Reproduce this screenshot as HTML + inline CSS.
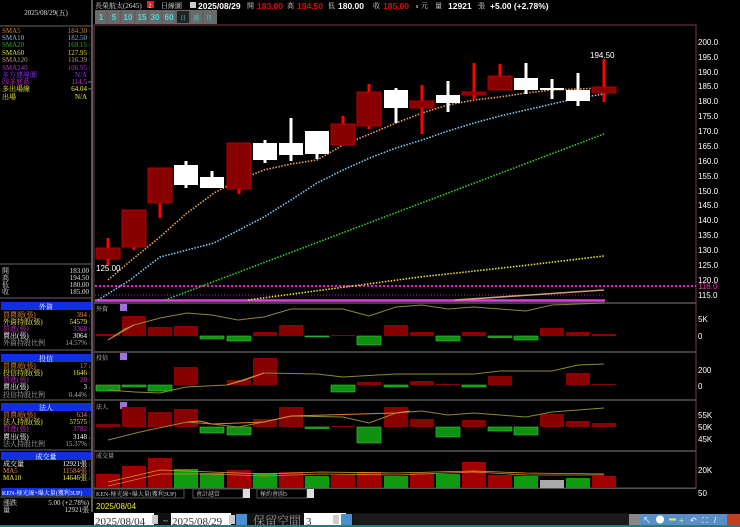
<!DOCTYPE html>
<html><head><meta charset="utf-8"><style>
html,body{margin:0;padding:0;background:#000;width:740px;height:527px;overflow:hidden}
svg{display:block}
text{font-family:"Liberation Serif","Noto Serif CJK SC",serif}
.s{font-size:7px}
.ax text,.sn text,text.sn{font-family:"Liberation Sans","Noto Sans CJK TC",sans-serif}
.ax text{font-size:8px;fill:#fff}
</style></head><body>
<svg width="740" height="527" viewBox="0 0 740 527">
<rect width="740" height="527" fill="#000"/>
<line x1="92" y1="0" x2="92" y2="512" stroke="#777" stroke-width="1.5"/>
<text x="46" y="15" class="s" fill="#ddd" text-anchor="middle">2025/08/29(五)</text>
<line x1="0" y1="26" x2="92" y2="26" stroke="#666"/>
<g class="s">
<text x="2" y="33" fill="#d08040">SMA5</text><text x="87" y="33" fill="#d08040" text-anchor="end">184.30</text>
<text x="2" y="40" fill="#7ab8e0">SMA10</text><text x="87" y="40" fill="#7ab8e0" text-anchor="end">182.50</text>
<text x="2" y="47" fill="#3a3">SMA20</text><text x="87" y="47" fill="#3a3" text-anchor="end">169.15</text>
<text x="2" y="55" fill="#dd3">SMA60</text><text x="87" y="55" fill="#dd3" text-anchor="end">127.95</text>
<text x="2" y="62" fill="#b98">SMA120</text><text x="87" y="62" fill="#b98" text-anchor="end">116.39</text>
<text x="2" y="70" fill="#a3c">SMA240</text><text x="87" y="70" fill="#a3c" text-anchor="end">106.95</text>
<text x="2" y="77" fill="#83f">多方連線圖</text><text x="87" y="77" fill="#83f" text-anchor="end">N/A</text>
<text x="2" y="84" fill="#c3c">四多底系</text><text x="87" y="84" fill="#c3c" text-anchor="end">114.5</text>
<text x="2" y="91" fill="#ee3">多出場線</text><text x="87" y="91" fill="#ee3" text-anchor="end">64.04</text>
<text x="2" y="99" fill="#ee3">出場</text><text x="87" y="99" fill="#ee3" text-anchor="end">N/A</text>
</g>
<g fill="#f22" font-size="6">
<text x="88" y="33">↑</text><text x="88" y="40">↑</text><text x="88" y="47">↑</text><text x="88" y="55">↑</text><text x="88" y="62">↑</text><text x="88" y="70">↑</text>
</g>
<g fill="#ccc" font-size="6"><text x="88" y="84">=</text><text x="88" y="91">=</text></g>
<line x1="0" y1="264" x2="92" y2="264" stroke="#666"/>
<g class="s" fill="#ddd">
<text x="2" y="273">開</text><text x="89" y="273" text-anchor="end">183.00</text>
<text x="2" y="280">高</text><text x="89" y="280" text-anchor="end">194.50</text>
<text x="2" y="287">低</text><text x="89" y="287" text-anchor="end">180.00</text>
<text x="2" y="294">收</text><text x="89" y="294" text-anchor="end">185.00</text>
</g>
<line x1="0" y1="298" x2="92" y2="298" stroke="#666"/>
<rect x="1" y="302" width="90" height="8" fill="#1030e0"/>
<text x="46" y="309" class="s" fill="#fff" text-anchor="middle">外資</text>
<g class="s">
<text x="3" y="317" fill="#e84">買賣超(張)</text><text x="87" y="317" fill="#e84" text-anchor="end">394</text>
<text x="3" y="324" fill="#ee4">外資持股(張)</text><text x="87" y="324" fill="#ee4" text-anchor="end">54579</text>
<text x="3" y="331" fill="#c3c">買進(張)</text><text x="87" y="331" fill="#c3c" text-anchor="end">3368</text>
<text x="3" y="338" fill="#fff">賣出(張)</text><text x="87" y="338" fill="#fff" text-anchor="end">3064</text>
<text x="3" y="345" fill="#aaa">外資持股比例</text><text x="87" y="345" fill="#aaa" text-anchor="end">14.57%</text>
</g>
<line x1="0" y1="350" x2="92" y2="350" stroke="#666"/>
<rect x="1" y="354" width="90" height="8" fill="#1030e0"/>
<text x="46" y="361" class="s" fill="#fff" text-anchor="middle">投信</text>
<g class="s">
<text x="3" y="368" fill="#e84">買賣超(張)</text><text x="87" y="368" fill="#e84" text-anchor="end">17</text>
<text x="3" y="375" fill="#ee4">投信持股(張)</text><text x="87" y="375" fill="#ee4" text-anchor="end">1646</text>
<text x="3" y="382" fill="#c3c">買進(張)</text><text x="87" y="382" fill="#c3c" text-anchor="end">20</text>
<text x="3" y="389" fill="#fff">賣出(張)</text><text x="87" y="389" fill="#fff" text-anchor="end">3</text>
<text x="3" y="397" fill="#aaa">投信持股比例</text><text x="87" y="397" fill="#aaa" text-anchor="end">0.44%</text>
</g>
<line x1="0" y1="400" x2="92" y2="400" stroke="#666"/>
<rect x="1" y="403" width="90" height="8" fill="#1030e0"/>
<text x="46" y="410" class="s" fill="#fff" text-anchor="middle">法人</text>
<g class="s">
<text x="3" y="417" fill="#e84">買賣超(張)</text><text x="87" y="417" fill="#e84" text-anchor="end">634</text>
<text x="3" y="424" fill="#ee4">法人持股(張)</text><text x="87" y="424" fill="#ee4" text-anchor="end">57575</text>
<text x="3" y="431" fill="#c3c">買進(張)</text><text x="87" y="431" fill="#c3c" text-anchor="end">3782</text>
<text x="3" y="439" fill="#fff">賣出(張)</text><text x="87" y="439" fill="#fff" text-anchor="end">3148</text>
<text x="3" y="446" fill="#aaa">法人持股比例</text><text x="87" y="446" fill="#aaa" text-anchor="end">15.37%</text>
</g>
<line x1="0" y1="450" x2="92" y2="450" stroke="#666"/>
<rect x="1" y="452" width="90" height="8" fill="#1030e0"/>
<text x="46" y="459" class="s" fill="#fff" text-anchor="middle">成交量</text>
<g class="s">
<text x="3" y="466" fill="#fff">成交量</text><text x="87" y="466" fill="#fff" text-anchor="end">12921張</text>
<text x="3" y="473" fill="#e84">MA5</text><text x="87" y="473" fill="#e84" text-anchor="end">11584張</text>
<text x="3" y="480" fill="#ee4">MA10</text><text x="87" y="480" fill="#ee4" text-anchor="end">14646張</text>
</g>
<g fill="#2c2" font-size="6">
<text x="88" y="317">↓</text><text x="88" y="368">↓</text><text x="88" y="389">↓</text><text x="88" y="417">↓</text><text x="88" y="439">↓</text><text x="88" y="466">↓</text><text x="88" y="480">↓</text>
</g>
<g fill="#f22" font-size="6">
<text x="88" y="324">↑</text><text x="88" y="331">↑</text><text x="88" y="338">↑</text><text x="88" y="345">↑</text><text x="88" y="375">↑</text><text x="88" y="382">↑</text><text x="88" y="397">↑</text><text x="88" y="424">↑</text><text x="88" y="431">↑</text><text x="88" y="446">↑</text><text x="88" y="473">↑</text>
</g>
<rect x="1" y="488" width="90" height="8" fill="#1030e0"/>
<text x="2" y="495" font-size="6" fill="#fff">KEN-極光線+爆大量(獲利3UP)</text>
<line x1="0" y1="497" x2="92" y2="497" stroke="#666"/>
<g class="s" fill="#ddd">
<text x="3" y="505">漲跌</text><text x="89" y="505" text-anchor="end">5.00 (+2.78%)</text>
<text x="3" y="512">量</text><text x="89" y="512" text-anchor="end">12921張</text>
</g>

<!-- top header -->
<g font-size="7">
<text x="95" y="8" fill="#ddd">長榮航太(2645)</text>
<rect x="147" y="1" width="7" height="7" fill="#d22"/><text x="148.5" y="7.5" font-size="6" fill="#fff">2</text>
<text x="161" y="8" fill="#ddd">日線圖</text>
<rect x="190" y="2" width="6" height="6" fill="#ccc"/>
<g class="sn" font-weight="bold" font-size="8.5">
<text x="198" y="9" fill="#fff">2025/08/29</text>
<text x="257" y="9" fill="#e00">183.00</text>
<text x="297" y="9" fill="#e00">194.50</text>
<text x="338" y="9" fill="#fff">180.00</text>
<text x="383" y="9" fill="#e00">185.00</text>
<text x="448" y="9" fill="#fff">12921</text>
<text x="490" y="9" fill="#fff">+5.00 (+2.78%)</text>
</g>
<text x="247" y="8" fill="#ddd">開</text>
<text x="287" y="8" fill="#ddd">高</text>
<text x="328" y="8" fill="#ddd">低</text>
<text x="373" y="8" fill="#ddd">收</text>
<text x="416" y="8" fill="#fff" font-size="6">s</text><text x="421" y="8" fill="#ddd">元</text>
<text x="435" y="8" fill="#ddd">量</text>
<text x="478" y="8" fill="#ddd">張</text>
</g>
<rect x="95" y="10" width="122" height="14" fill="#6a6a6a"/>
<g class="sn" fill="#4dd" font-size="8" font-weight="bold" text-anchor="middle">
<text x="101" y="20">1</text><text x="114" y="20">5</text><text x="128" y="20">10</text><text x="142" y="20">15</text><text x="155" y="20">30</text><text x="169" y="20">60</text>
</g>
<rect x="177" y="11" width="12" height="12" fill="#222"/>
<text x="183" y="20" font-size="6" fill="#4dd" text-anchor="middle">日</text>
<text x="196" y="20" font-size="6" fill="#4dd" text-anchor="middle">週</text>
<text x="209" y="20" font-size="6" fill="#4dd" text-anchor="middle">月</text>
<g stroke="#555"><line x1="107" y1="11" x2="107" y2="23"/><line x1="121" y1="11" x2="121" y2="23"/><line x1="135" y1="11" x2="135" y2="23"/><line x1="148" y1="11" x2="148" y2="23"/><line x1="162" y1="11" x2="162" y2="23"/><line x1="176" y1="11" x2="176" y2="23"/><line x1="190" y1="11" x2="190" y2="23"/><line x1="203" y1="11" x2="203" y2="23"/></g>

<rect x="94" y="25" width="602" height="463" fill="none" stroke="#7a3a4a"/>
<g stroke="#555" stroke-width="1.5">
<line x1="94" y1="303" x2="696" y2="303"/><line x1="94" y1="352" x2="696" y2="352"/><line x1="94" y1="400" x2="696" y2="400"/><line x1="94" y1="451" x2="696" y2="451"/><line x1="94" y1="488.5" x2="696" y2="488.5"/>
</g>
<g class="ax">
<text x="698" y="45">200.0</text><text x="698" y="60">195.0</text><text x="698" y="75">190.0</text><text x="698" y="89">185.0</text><text x="698" y="104">180.0</text><text x="698" y="119">175.0</text><text x="698" y="134">170.0</text><text x="698" y="149">165.0</text><text x="698" y="164">160.0</text><text x="698" y="179">155.0</text><text x="698" y="194">150.0</text><text x="698" y="208">145.0</text><text x="698" y="223">140.0</text><text x="698" y="238">135.0</text><text x="698" y="253">130.0</text><text x="698" y="268">125.0</text><text x="698" y="283">120.0</text><text x="698" y="298">115.0</text>
<text x="698" y="322">5K</text><text x="698" y="339">0</text>
<text x="698" y="373">200</text><text x="698" y="389">0</text>
<text x="698" y="418">55K</text><text x="698" y="430">50K</text><text x="698" y="442">45K</text>
<text x="698" y="473">20K</text><text x="698" y="496">50</text>
<text x="698" y="289" style="fill:#e3a">118.0</text>
</g>

<line x1="95" y1="286" x2="696" y2="286" stroke="#e020c0" stroke-width="2" stroke-dasharray="2 2"/>
<line x1="95" y1="295" x2="604" y2="295" stroke="#b020b0" stroke-width="1" stroke-dasharray="1 2"/>
<line x1="95" y1="300.5" x2="605" y2="300.5" stroke="#e040e0" stroke-width="2.5"/>
<g fill="none" stroke-width="1.6" stroke-dasharray="1.5 1.5">
<polyline stroke="#f0a050" points="108,280 134,258 160,237 187,213 214,193 239,180 264,170 291,164 317,160 343,145 370,134 396,123 422,113 448,105 474,100 500,97 526,93 552,90 578,89 604,88"/>
<polyline stroke="#80c8f0" points="98,300 130,280 160,257 187,250 214,243 239,230 264,217 291,200 317,183 343,170 372,157 396,148 422,140 448,131 474,123 500,116 526,110 552,104 578,98 604,94"/>
<polyline stroke="#30d030" points="165,300 604,134"/>
<polyline stroke="#e8e030" points="248,300 330,289 420,277 520,266 604,256"/>
<polyline stroke="#d0a070" stroke-dasharray="none" points="455,300 530,295 604,290"/>
</g>
<g stroke-width="3">
<line x1="108" y1="238" x2="108" y2="265" stroke="#f00"/>
<line x1="134" y1="210" x2="134" y2="250" stroke="#f00"/>
<line x1="160" y1="168" x2="160" y2="218" stroke="#f00"/>
<line x1="186" y1="161" x2="186" y2="188" stroke="#fff"/>
<line x1="212" y1="171" x2="212" y2="188" stroke="#fff"/>
<line x1="239" y1="143" x2="239" y2="194" stroke="#f00"/>
<line x1="265" y1="140" x2="265" y2="163" stroke="#fff"/>
<line x1="291" y1="118" x2="291" y2="161" stroke="#fff"/>
<line x1="317" y1="131" x2="317" y2="159" stroke="#fff"/>
<line x1="343" y1="116" x2="343" y2="145" stroke="#f00"/>
<line x1="369" y1="84" x2="369" y2="129" stroke="#f00"/>
<line x1="396" y1="88" x2="396" y2="123" stroke="#fff"/>
<line x1="422" y1="85" x2="422" y2="134" stroke="#f00"/>
<line x1="448" y1="81" x2="448" y2="112" stroke="#fff"/>
<line x1="474" y1="63" x2="474" y2="99" stroke="#f00"/>
<line x1="500" y1="64" x2="500" y2="90" stroke="#f00"/>
<line x1="526" y1="63" x2="526" y2="94" stroke="#fff"/>
<line x1="552" y1="79" x2="552" y2="99" stroke="#fff"/>
<line x1="578" y1="73" x2="578" y2="106" stroke="#fff"/>
<line x1="604" y1="59" x2="604" y2="102" stroke="#f00"/>
</g>
<g stroke="#b00000" stroke-width="1">
<rect x="96" y="248" width="24" height="11" fill="#880000"/>
<rect x="122" y="210" width="24" height="37" fill="#880000"/>
<rect x="148" y="168" width="24" height="35" fill="#880000"/>
<rect x="227" y="143" width="24" height="46" fill="#880000"/>
<rect x="331" y="124" width="24" height="21" fill="#880000"/>
<rect x="357" y="92" width="24" height="34" fill="#880000"/>
<rect x="410" y="101" width="24" height="7" fill="#880000"/>
<rect x="462" y="92" width="24" height="3" fill="#880000"/>
<rect x="488" y="76" width="24" height="14" fill="#880000"/>
<rect x="592" y="87" width="24" height="6" fill="#880000"/>
</g>
<g fill="#fff">
<rect x="174" y="165" width="24" height="20"/>
<rect x="200" y="177" width="24" height="11"/>
<rect x="253" y="143" width="24" height="17"/>
<rect x="279" y="143" width="24" height="12"/>
<rect x="305" y="131" width="24" height="23"/>
<rect x="384" y="90" width="24" height="18"/>
<rect x="436" y="95" width="24" height="8"/>
<rect x="514" y="78" width="24" height="12"/>
<rect x="540" y="88" width="24" height="2"/>
<rect x="566" y="90" width="24" height="11"/>
</g>
<text x="590" y="58" font-size="8" fill="#fff" class="sn">194.50</text>
<text x="96" y="271" font-size="8" fill="#fff" class="sn">125.00</text>

<text x="96" y="311" font-size="6" fill="#ccc">外資</text>
<rect x="120" y="304" width="7" height="7" fill="#a070e0"/>
<g fill="#880000">
<rect x="96" y="334" width="24" height="2"/><rect x="122" y="316" width="24" height="20"/><rect x="148" y="327" width="24" height="9"/><rect x="174" y="326" width="24" height="10"/>
<rect x="253" y="332" width="24" height="4"/><rect x="279" y="325" width="24" height="11"/><rect x="331" y="335" width="24" height="1"/><rect x="384" y="325" width="24" height="11"/><rect x="410" y="332" width="24" height="4"/><rect x="462" y="332" width="24" height="4"/><rect x="540" y="328" width="24" height="8"/><rect x="566" y="332" width="24" height="4"/><rect x="592" y="334" width="24" height="2"/>
</g>
<g fill="#109010" stroke="#3c3" stroke-width="0.6">
<rect x="200" y="336" width="24" height="3"/><rect x="227" y="336" width="24" height="5"/><rect x="305" y="336" width="24" height="1"/><rect x="357" y="336" width="24" height="9"/><rect x="436" y="336" width="24" height="5"/><rect x="488" y="336" width="24" height="1.5"/><rect x="514" y="336" width="24" height="4"/>
</g>
<polyline fill="none" stroke="#8a8a30" stroke-width="1" points="108,340 134,325 160,318 187,313 212,315 238,320 264,317 291,309 317,309 343,309 369,316 396,307 422,305 448,309 474,307 500,309 526,311 552,305 578,304 604,303"/>
<polyline fill="none" stroke="#e08030" stroke-width="1" points="108,340 125,329 134,325"/>

<text x="96" y="360" font-size="6" fill="#ccc">投信</text>
<rect x="120" y="353" width="7" height="7" fill="#a070e0"/>
<g fill="#880000">
<rect x="174" y="367" width="24" height="18"/><rect x="227" y="380" width="24" height="5"/><rect x="253" y="358" width="24" height="27"/><rect x="357" y="382" width="24" height="3"/><rect x="410" y="381" width="24" height="4"/><rect x="436" y="384" width="24" height="1"/><rect x="488" y="376" width="24" height="9"/><rect x="566" y="373" width="24" height="12"/><rect x="592" y="384" width="24" height="1"/>
</g>
<g fill="#109010" stroke="#3c3" stroke-width="0.6">
<rect x="96" y="385" width="24" height="6"/><rect x="122" y="385" width="24" height="2"/><rect x="148" y="385" width="24" height="6"/><rect x="331" y="385" width="24" height="7"/><rect x="384" y="385" width="24" height="2"/><rect x="462" y="385" width="24" height="2"/>
</g>
<polyline fill="none" stroke="#8a8a30" stroke-width="1" points="108,390 135,392 160,393 186,387 227,385 264,373 317,374 343,377 396,374 474,374 500,371 552,371 578,365 604,364"/>
<polyline fill="none" stroke="#e08030" stroke-width="1" points="227,385 245,380 264,373"/>

<text x="96" y="409" font-size="6" fill="#ccc">法人</text>
<rect x="120" y="402" width="7" height="7" fill="#a070e0"/>
<g fill="#880000">
<rect x="96" y="424" width="24" height="3"/><rect x="122" y="407" width="24" height="20"/><rect x="148" y="412" width="24" height="15"/><rect x="174" y="409" width="24" height="18"/><rect x="253" y="419" width="24" height="8"/><rect x="279" y="407" width="24" height="20"/><rect x="331" y="426" width="24" height="1"/><rect x="384" y="407" width="24" height="20"/><rect x="410" y="419" width="24" height="8"/><rect x="462" y="420" width="24" height="7"/><rect x="540" y="414" width="24" height="13"/><rect x="566" y="421" width="24" height="6"/><rect x="592" y="423" width="24" height="4"/>
</g>
<g fill="#109010" stroke="#3c3" stroke-width="0.6">
<rect x="200" y="427" width="24" height="6"/><rect x="227" y="427" width="24" height="8"/><rect x="305" y="427" width="24" height="1.5"/><rect x="357" y="427" width="24" height="16"/><rect x="436" y="427" width="24" height="10"/><rect x="488" y="427" width="24" height="4"/><rect x="514" y="427" width="24" height="8"/>
</g>
<polyline fill="none" stroke="#8a8a30" stroke-width="1" points="108,440 140,432 187,422 212,424 238,427 264,422 291,416 343,417 369,423 396,413 422,411 448,415 474,413 500,415 526,417 552,412 578,410 604,408"/>
<polyline fill="none" stroke="#e08030" stroke-width="1" points="187,422 200,421 212,424 264,422 291,416 396,413 410,411"/>

<text x="96" y="458" font-size="6" fill="#ccc">成交量</text>
<g fill="#a00000">
<rect x="96" y="474" width="24" height="14"/><rect x="122" y="466" width="24" height="22"/><rect x="148" y="458" width="24" height="30"/><rect x="227" y="470" width="24" height="18"/><rect x="279" y="472" width="24" height="16"/><rect x="331" y="475" width="24" height="13"/><rect x="357" y="472" width="24" height="16"/><rect x="410" y="473" width="24" height="15"/><rect x="462" y="462" width="24" height="26"/><rect x="488" y="475" width="24" height="13"/><rect x="592" y="476" width="24" height="12"/>
</g>
<g fill="#109a10">
<rect x="174" y="469" width="24" height="19"/><rect x="200" y="473" width="24" height="15"/><rect x="253" y="473" width="24" height="15"/><rect x="305" y="476" width="24" height="12"/><rect x="384" y="476" width="24" height="12"/><rect x="436" y="474" width="24" height="14"/><rect x="514" y="476" width="24" height="12"/><rect x="566" y="478" width="24" height="10"/>
</g>
<rect x="540" y="480" width="24" height="8" fill="#aaa"/>
<polyline fill="none" stroke="#d0a030" stroke-width="0.8" points="108,482 160,470 212,472 264,474 320,472 396,473 474,471 526,473 604,474"/>
<polyline fill="none" stroke="#e08030" stroke-width="0.8" points="108,486 160,474 212,474 264,476 320,474 396,475 474,472 526,475 604,475"/>

<rect x="94" y="489" width="602" height="9" fill="#000"/>
<rect x="94" y="489" width="90" height="9" fill="#000" stroke="#555"/>
<text x="96" y="496" font-size="6" fill="#ccc">KEN-極光線+爆大量(獲利3UP)</text>
<rect x="193" y="489" width="50" height="9" fill="#000" stroke="#555"/>
<text x="196" y="496" font-size="6" fill="#ccc">會計越當</text>
<rect x="243" y="489" width="7" height="9" fill="#ddd"/>
<rect x="257" y="489" width="50" height="9" fill="#000" stroke="#555"/>
<text x="260" y="496" font-size="6" fill="#ccc">極約會圖5</text>
<rect x="307" y="489" width="7" height="9" fill="#ddd"/>
<text x="96" y="509" font-size="8" fill="#ee3" class="sn">2025/08/04</text>
<rect x="94" y="513" width="535" height="14" fill="#111"/>
<rect x="94" y="513" width="60" height="13" fill="#fff"/>
<text x="95" y="525" font-size="11" fill="#333">2025/08/04</text>
<rect x="152" y="515" width="6" height="9" fill="#ccc"/>
<text x="163" y="524" font-size="9" fill="#ccc">~</text>
<rect x="171" y="513" width="60" height="13" fill="#fff"/>
<text x="172" y="525" font-size="11" fill="#333">2025/08/29</text>
<rect x="229" y="515" width="6" height="9" fill="#ccc"/>
<rect x="236" y="514" width="11" height="11" fill="#4a90d0"/>
<text x="253" y="525" font-size="12" fill="#999">保留空間</text>
<rect x="304" y="513" width="42" height="13" fill="#fff"/>
<text x="306" y="525" font-size="11" fill="#333">3</text>
<rect x="333" y="515" width="6" height="9" fill="#ccc"/>
<rect x="341" y="514" width="11" height="11" fill="#4a90d0"/>
<rect x="353" y="514" width="276" height="11" fill="#1a1a1a"/>
<rect x="629" y="514" width="11" height="11" fill="#888"/>
<rect x="640" y="514" width="100" height="11" fill="#5a8ec8"/>
<g fill="#fff" font-size="8" class="sn">
<text x="643" y="523">↖</text><circle cx="660" cy="519.5" r="4"/><rect x="669" y="518.5" width="7" height="2" fill="#ee3"/><text x="679" y="523" fill="#ee3">+</text><text x="690" y="523">↶</text><text x="702" y="523">⛶</text><text x="714" y="523">/</text>
</g>
<rect x="727" y="514" width="13" height="11" fill="#c04020"/>
<rect x="0" y="525" width="740" height="2" fill="#2a7a7a"/>
</svg>
</body></html>
